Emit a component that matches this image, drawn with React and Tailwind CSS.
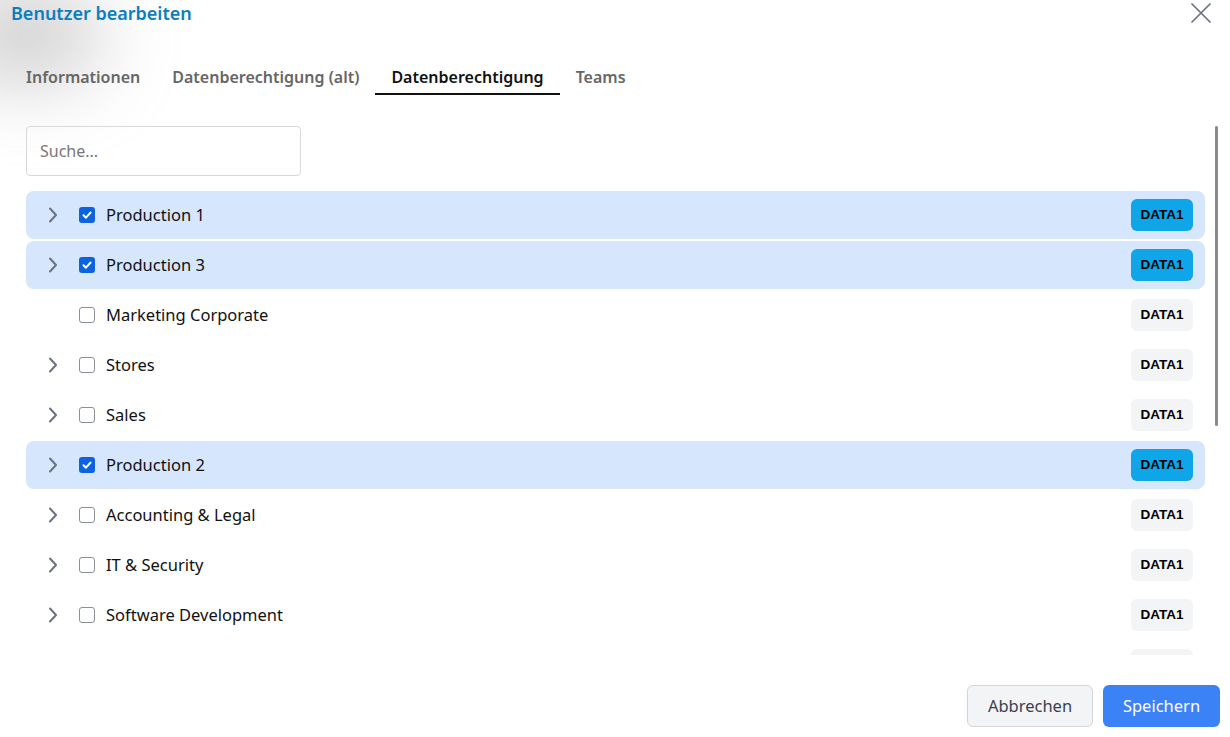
import React from "react";

const rows = [
  { name: "Production 1", checked: true, chevron: true },
  { name: "Production 3", checked: true, chevron: true },
  { name: "Marketing Corporate", checked: false, chevron: false },
  { name: "Stores", checked: false, chevron: true },
  { name: "Sales", checked: false, chevron: true },
  { name: "Production 2", checked: true, chevron: true },
  { name: "Accounting & Legal", checked: false, chevron: true },
  { name: "IT & Security", checked: false, chevron: true },
  { name: "Software Development", checked: false, chevron: true },
  { name: "Human Resources", checked: false, chevron: true },
];

function Chevron() {
  return (
    <svg width="10" height="16" viewBox="0 0 10 16" fill="none">
      <polyline points="2,1.5 8,8 2,14.5" stroke="#6b7280" strokeWidth="2" strokeLinecap="round" strokeLinejoin="round" />
    </svg>
  );
}

function Box({ checked }) {
  if (checked) {
    return (
      <span className="flex h-4 w-4 items-center justify-center rounded-[3px] bg-[#0b63e0]">
        <svg width="12" height="12" viewBox="0 0 12 12" fill="none">
          <polyline points="2.5,6.3 5,8.7 9.6,3.5" stroke="white" strokeWidth="2" strokeLinecap="round" strokeLinejoin="round" />
        </svg>
      </span>
    );
  }
  return <span className="block h-4 w-4 rounded-[3px] border border-[#8a8f98] bg-white" />;
}

export default function App() {
  return (
    <div
      className="relative h-[737px] w-[1230px] overflow-hidden bg-white"
      style={{ fontFamily: '"Noto Sans", "Open Sans", sans-serif' }}
    >
      <div className="pointer-events-none absolute -left-[50px] -top-[10px] h-[90px] w-[150px] rounded-full bg-[#9a9a9a] opacity-50 blur-2xl" />
      <div className="relative flex h-[737px] flex-col">
        <div className="flex h-[28px] items-start justify-between pl-[11px] pr-[18px]">
          <h1 className="text-[18px] font-semibold leading-[26px] text-[#0b7dc1]">Benutzer bearbeiten</h1>
          <svg width="22" height="22" viewBox="0 0 22 22" className="mt-[2px]">
            <path d="M2 2 L20 20 M20 2 L2 20" stroke="#6b7280" strokeWidth="1.7" strokeLinecap="round" />
          </svg>
        </div>
        <div className="mt-[37px] flex pl-[10px]">
          {["Informationen", "Datenberechtigung (alt)", "Datenberechtigung", "Teams"].map((t) => {
            const active = t === "Datenberechtigung";
            return (
              <div
                key={t}
                className={
                  "border-b-2 px-4 pb-[4px] text-[16px] font-semibold leading-[24px] " +
                  (active ? "border-[#111] text-[#111]" : "border-transparent text-[#666]")
                }
              >
                {t}
              </div>
            );
          })}
        </div>
        <div className="relative mt-[31px] h-[529px] overflow-hidden pl-[26px] pr-[25px]">
          <div className="flex h-[50px] w-[275px] items-center rounded-[4px] border border-[#d8d8d8] px-[13px] text-[16px] text-[#777]">
            Suche...
          </div>
          <div className="mt-[15px] flex flex-col gap-[2px]">
            {rows.map((r) => (
              <div
                key={r.name}
                className={
                  "flex h-12 shrink-0 items-center rounded-[8px] pl-[22px] pr-[12px] " +
                  (r.checked ? "bg-[#d5e6fd]" : "")
                }
              >
                <span className="flex w-[31px] items-center">{r.chevron ? <Chevron /> : null}</span>
                <Box checked={r.checked} />
                <span className="ml-[11px] flex-1 text-[16.5px] text-[#111]">{r.name}</span>
                <span
                  className={
                    "flex h-8 w-[62px] items-center justify-center rounded-[6px] text-[13.5px] font-bold text-black " +
                    (r.checked ? "bg-[#0ea5e9]" : "bg-[#f3f4f6]")
                  }
                  style={{ fontFamily: '"Liberation Sans", Arial, sans-serif' }}
                >
                  DATA1
                </span>
              </div>
            ))}
          </div>
          <div className="absolute right-[12px] top-0 h-[300px] w-[3px] rounded-full bg-[#8a8a8a]" />
        </div>
        <div className="mt-[30px] flex justify-end gap-[10px] pr-[10px]">
          <button className="h-[42px] w-[126px] rounded-[6px] border border-[#d1d5db] bg-[#f3f4f6] text-[16.5px] text-[#374151]">
            Abbrechen
          </button>
          <button className="h-[42px] w-[117px] rounded-[6px] bg-[#3b82f6] text-[16.5px] text-white">
            Speichern
          </button>
        </div>
      </div>
    </div>
  );
}
